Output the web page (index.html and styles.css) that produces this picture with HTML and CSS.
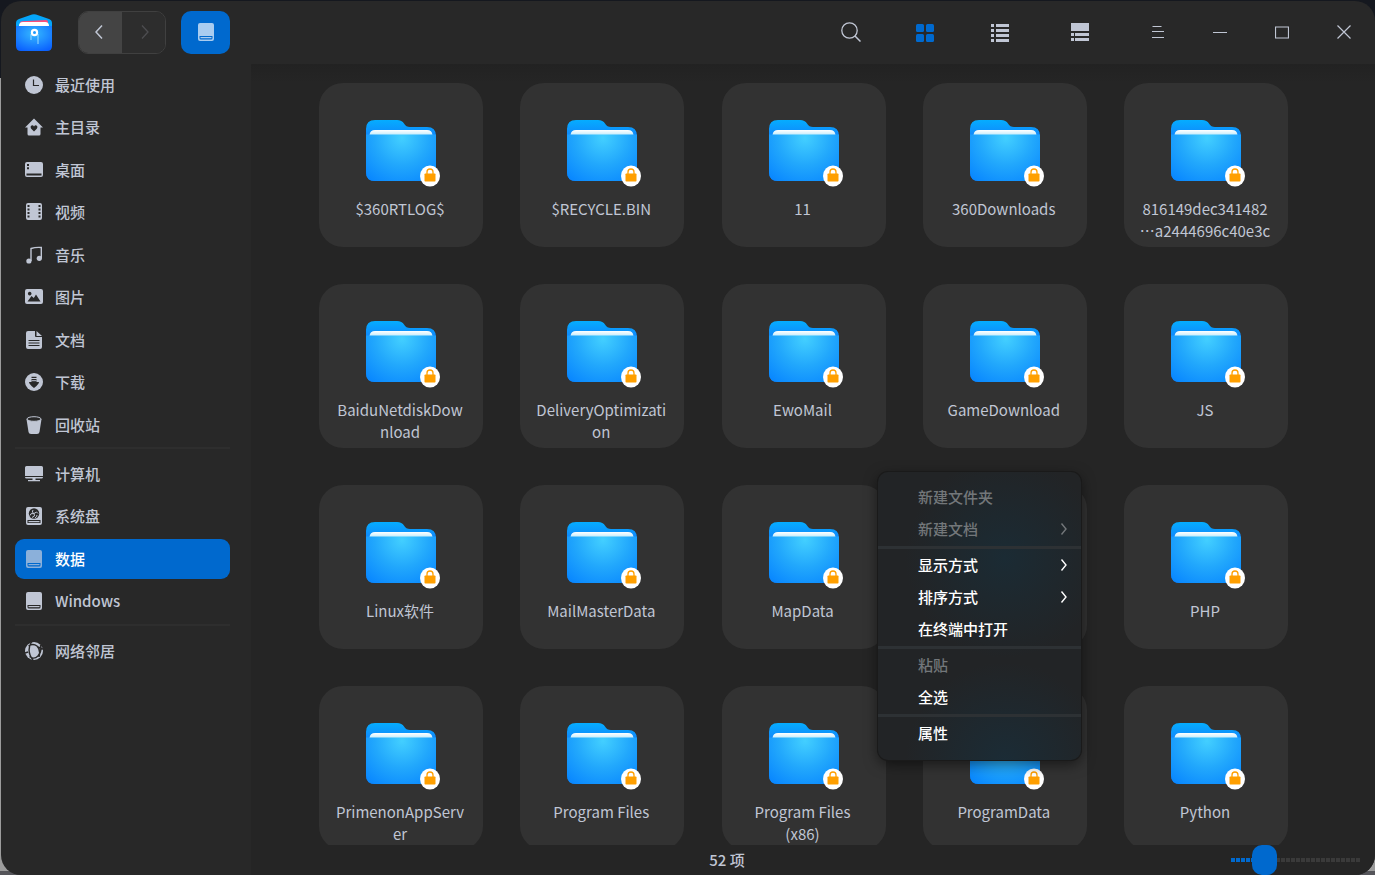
FILE: index.html
```html
<!DOCTYPE html>
<html lang="zh-CN">
<head>
<meta charset="utf-8">
<title>数据</title>
<link rel="stylesheet" href="styles.css">
</head>
<body>
<svg class="defs" aria-hidden="true">
  <defs>
    <linearGradient id="folder-back" x1="0" y1="0" x2="0" y2="1">
      <stop offset="0" stop-color="#05adff"/><stop offset=".25" stop-color="#1088fb"/><stop offset="1" stop-color="#0a80ff"/>
    </linearGradient>
    <radialGradient id="folder-front" gradientUnits="userSpaceOnUse" cx="43" cy="19" r="54">
      <stop offset="0" stop-color="#43cfff"/><stop offset=".5" stop-color="#22a8fc"/><stop offset="1" stop-color="#0785ff"/>
    </radialGradient>
    <linearGradient id="sheet" x1="0" y1="0" x2="0" y2="1">
      <stop offset="0" stop-color="#ffffff"/><stop offset="1" stop-color="#c2ebfb"/>
    </linearGradient>
    <radialGradient id="logo-front" cx=".5" cy=".3" r=".75">
      <stop offset="0" stop-color="#35b9ff"/><stop offset="1" stop-color="#0b62ff"/>
    </radialGradient>
  </defs>
  <symbol id="folder" viewBox="0 0 84 68">
    <path d="M7 10q0-9 9-9h22q5 0 7 3.500q2 3.500 6 3.500h17q9 0 9 9v36q0 9-9 9H16q-9 0-9-9z" fill="url(#folder-back)"/>
    <path d="M10.500 16q.5-5 5.500-5h52q5 0 5.500 5z" fill="url(#sheet)"/>
    <path d="M7 15.500h70V53q0 9-9 9H16q-9 0-9-9z" fill="url(#folder-front)"/>
    <ellipse cx="71" cy="57" rx="10" ry="10.500" fill="#fff"/>
    <path d="M68 57v-4q0-3 3-3t3 3v4" fill="none" stroke="#ff9f00" stroke-width="1.300"/>
    <rect x="65.500" y="54.500" width="11" height="8" rx=".8" fill="#ff9f00"/>
  </symbol>
  <symbol id="clock" viewBox="0 0 18 18"><circle cx="9" cy="9" r="9" fill="currentColor"/><path d="M8.500 3.500v6H14" fill="none" stroke="#282828" stroke-width="1.200"/></symbol>
  <symbol id="home" viewBox="0 0 18 18"><path fill="currentColor" fill-rule="evenodd" d="M9 .5L18 9.500h-2.500V16q0 1.500-1.500 1.500H4q-1.500 0-1.500-1.500V9.500H0zM9 13.500l3-3q1.200-2-.5-3Q10 6.900 9 8.500 8 6.900 6.500 7.500q-1.700 1-.5 3z"/></symbol>
  <symbol id="desktop" viewBox="0 0 18 18"><path fill="currentColor" fill-rule="evenodd" d="M2 1h14q2 0 2 2v11q0 2-2 2H2q-2 0-2-2V3q0-2 2-2zM2 3v2h2V3zM2 6.300v2h2v-2zM1.500 12.500v2h15v-2z"/></symbol>
  <symbol id="video" viewBox="0 0 18 18"><path fill="currentColor" fill-rule="evenodd" d="M3 0h12q2 0 2 2v13q0 2-2 2H3q-2 0-2-2V2q0-2 2-2zM2.500 2v2h2V2zM2.500 5.500v2h2v-2zM2.500 9v2h2V9zM2.500 12.500v2h2v-2zM13.500 2v2h2V2zM13.500 5.500v2h2v-2zM13.500 9v2h2V9zM13.500 12.500v2h2v-2z"/></symbol>
  <symbol id="music" viewBox="0 0 18 18"><path d="M6 15V2.500q5-1.500 10.300-1V12" fill="none" stroke="currentColor" stroke-width="1.400"/><circle cx="3.900" cy="15" r="2.600" fill="currentColor"/><circle cx="14.300" cy="12.300" r="2.600" fill="currentColor"/></symbol>
  <symbol id="picture" viewBox="0 0 18 18"><path fill="currentColor" fill-rule="evenodd" d="M2 1h14q2 0 2 2v11q0 2-2 2H2q-2 0-2-2V3q0-2 2-2zM2.500 13.500h13L11 6.500 8.800 10 6.500 8zM4.700 3.800a1.800 1.800 0 1 0 .01 0z"/></symbol>
  <symbol id="document" viewBox="0 0 18 18"><path fill="currentColor" d="M3 0h7v5q0 1 1 1h6v10q0 2-2 2H3q-2 0-2-2V2q0-2 2-2zM11.500 0L17 5h-5.500z"/><path d="M3.500 9.500h11M3.500 12h11M3.500 14.500h11" stroke="#282828" stroke-width="1"/></symbol>
  <symbol id="download" viewBox="0 0 18 18"><circle cx="9" cy="9" r="9" fill="currentColor"/><path d="M6.500 3.800h5v1.200h-5zM6.500 6h5v3H14q0 2-5 6-5-4-5-6h2.500z" fill="#282828"/><path d="M6.500 7.700h5" stroke="currentColor"/></symbol>
  <symbol id="trash" viewBox="0 0 18 18"><path fill="currentColor" d="M1.500 3l2 13q.4 2 2.500 2h6q2.100 0 2.500-2l2-13z"/><ellipse cx="9" cy="3" rx="7" ry="2.300" fill="#282828" stroke="currentColor"/></symbol>
  <symbol id="computer" viewBox="0 0 18 18"><path fill="currentColor" d="M1.500 1h15Q18 1 18 2.500V11H0V2.500Q0 1 1.500 1zM0 12h18q0 1.500-1.500 1.500h-6V15H15v1.200H3V15h4.500v-1.500h-6Q0 13.500 0 12z"/></symbol>
  <symbol id="system" viewBox="0 0 18 18"><path fill="currentColor" fill-rule="evenodd" d="M3 0h12q2 0 2 2v14q0 2-2 2H3q-2 0-2-2V2q0-2 2-2zM2.500 13v3h13v-3z"/><path fill="currentColor" d="M3.500 14h11v1.200h-11z"/><circle cx="9" cy="6.500" r="5.200" fill="#282828"/><path d="M9 6.500q-3-1-1-3.500M9 6.500q3-3 4 0M9 6.500q2 3-2 4M9 6.500q-4-.5-4 2M12 8q0 2-2 3" fill="none" stroke="currentColor" stroke-width="1"/></symbol>
  <symbol id="disk" viewBox="0 0 18 18"><path fill="currentColor" fill-rule="evenodd" d="M3 0h12q2 0 2 2v14q0 2-2 2H3q-2 0-2-2V2q0-2 2-2zM2.500 13v2q0 1.500 1.500 1.500h10q1.500 0 1.500-1.500v-2z"/><path fill="currentColor" d="M3.500 14h11v1.200h-11z"/></symbol>
  <symbol id="network" viewBox="0 0 18 18"><circle cx="9" cy="9" r="9" fill="currentColor"/><path d="M6.500 0Q1 9 8 18M3.500 4Q8 1 12 4q4 4 2 11M15.500 3Q17 10 13 14t-8.500.5M0 11l3-1M13 5l5 2" fill="none" stroke="#282828" stroke-width="1.400"/></symbol>
  <symbol id="chevron" viewBox="0 0 8 14"><path d="M1.500 1.500L6 7l-4.500 5.500" fill="none" stroke="currentColor" stroke-width="1.400"/></symbol>
</svg>

<div class="window">
  <header class="titlebar">
    <svg class="logo" viewBox="0 0 36 37" aria-hidden="true">
      <path d="M0 9q0-3 3-4L16 .5q2-.7 4 0L33 5q3 1 3 4v10H0z" fill="#05a5fa"/>
      <path d="M4 9q0-1.500 2-1.700L30 6q2 0 2 2v5H4z" fill="#fa4e7c"/>
      <path d="M3 12q0-4 4-4h22q4 0 4 4z" fill="#fff"/>
      <path d="M0 12h36v20q0 5-5 5H5q-5 0-5-5z" fill="url(#logo-front)"/>
      <path d="M15 20v6M22 20v10" stroke="#9bdcff" stroke-width="1"/>
      <circle cx="18.500" cy="18.500" r="2.600" fill="#1f9cff" stroke="#fff" stroke-width="2.200"/>
    </svg>
    <div class="history">
      <button class="history-button" type="button" aria-label="后退"><svg width="8" height="14" viewBox="0 0 8 14"><path d="M7 .5L1 7l6 6.500" fill="none" stroke="currentColor" stroke-width="1.500"/></svg></button>
      <button class="history-button forward" type="button" aria-label="前进" disabled><svg width="8" height="14" viewBox="0 0 8 14"><path d="M1 .5L7 7l-6 6.500" fill="none" stroke="currentColor" stroke-width="1.300"/></svg></button>
    </div>
    <button class="location" type="button" aria-label="数据"><svg class="icon"><use href="#disk"/></svg></button>
    <div class="tools">
      <button class="tool" type="button" aria-label="搜索"><svg width="22" height="22" viewBox="0 0 22 22"><circle cx="10.500" cy="8.500" r="7.700" fill="none" stroke="currentColor" stroke-width="1.300"/><path d="M16 14l5.500 5.500" stroke="currentColor" stroke-width="1.500"/></svg></button>
      <button class="tool active" type="button" aria-label="图标视图"><svg width="18" height="18" viewBox="0 0 18 18" fill="currentColor"><rect width="8" height="8" rx="1.500"/><rect x="10" width="8" height="8" rx="1.500"/><rect y="10" width="8" height="8" rx="1.500"/><rect x="10" y="10" width="8" height="8" rx="1.500"/></svg></button>
      <button class="tool" type="button" aria-label="列表视图"><svg width="18" height="18" viewBox="0 0 18 18" fill="currentColor"><path d="M0 0h3v3H0zM5 0h13v3H5zM0 5h3v3H0zM5 5h13v3H5zM0 10h3v3H0zM5 10h13v3H5zM0 15h3v3H0zM5 15h13v3H5z"/></svg></button>
    </div>
    <button class="tool details" type="button" aria-label="详细信息"><svg width="18" height="18" viewBox="0 0 18 18" fill="currentColor"><path d="M0 0h18v8H0zM0 10h3v3H0zM4 10h14v3H4zM0 15h3v3H0zM4 15h14v3H4z"/></svg></button>
    <div class="window-buttons">
      <button class="window-button" type="button" aria-label="菜单"><svg width="14" height="14" viewBox="0 0 14 14"><path d="M1.500 1.500h9M1 6.500h12M1 12.500h12" stroke="currentColor"/></svg></button>
      <button class="window-button" type="button" aria-label="最小化"><svg width="14" height="14" viewBox="0 0 14 14"><path d="M0 7.500h14" stroke="currentColor"/></svg></button>
      <button class="window-button" type="button" aria-label="最大化"><svg width="14" height="14" viewBox="0 0 14 14"><path d="M.5 2h13v11H.5z" fill="none" stroke="currentColor" stroke-width="1.200"/></svg></button>
      <button class="window-button" type="button" aria-label="关闭"><svg width="14" height="14" viewBox="0 0 14 14"><path d="M.5.5l13 13M13.500.5l-13 13" stroke="currentColor" stroke-width="1.200"/></svg></button>
    </div>
  </header>

  <div class="body">
    <nav class="sidebar">
      <ul class="places">
        <li><a class="place" href="#recent"><svg class="icon"><use href="#clock"/></svg>最近使用</a></li>
        <li><a class="place" href="#homedir"><svg class="icon"><use href="#home"/></svg>主目录</a></li>
        <li><a class="place" href="#desk"><svg class="icon"><use href="#desktop"/></svg>桌面</a></li>
        <li><a class="place" href="#videos"><svg class="icon"><use href="#video"/></svg>视频</a></li>
        <li><a class="place" href="#songs"><svg class="icon"><use href="#music"/></svg>音乐</a></li>
        <li><a class="place" href="#pictures"><svg class="icon"><use href="#picture"/></svg>图片</a></li>
        <li><a class="place" href="#documents"><svg class="icon"><use href="#document"/></svg>文档</a></li>
        <li><a class="place" href="#downloads"><svg class="icon"><use href="#download"/></svg>下载</a></li>
        <li><a class="place" href="#bin"><svg class="icon"><use href="#trash"/></svg>回收站</a></li>
      </ul>
      <ul class="places">
        <li><a class="place" href="#machine"><svg class="icon"><use href="#computer"/></svg>计算机</a></li>
        <li><a class="place" href="#systemdisk"><svg class="icon"><use href="#system"/></svg>系统盘</a></li>
        <li><a class="place selected" href="#data" aria-current="page"><svg class="icon"><use href="#disk"/></svg>数据</a></li>
        <li><a class="place" href="#windows"><svg class="icon"><use href="#disk"/></svg>Windows</a></li>
      </ul>
      <ul class="places">
        <li><a class="place" href="#neighbours"><svg class="icon"><use href="#network"/></svg>网络邻居</a></li>
      </ul>
    </nav>

    <main class="content">
      <div class="files">
        <ul class="grid">
          <li class="card"><svg class="folder"><use href="#folder"/></svg><span class="name">$360RTLOG$</span></li>
          <li class="card"><svg class="folder"><use href="#folder"/></svg><span class="name">$RECYCLE.BIN</span></li>
          <li class="card"><svg class="folder"><use href="#folder"/></svg><span class="name">11</span></li>
          <li class="card"><svg class="folder"><use href="#folder"/></svg><span class="name">360Downloads</span></li>
          <li class="card"><svg class="folder"><use href="#folder"/></svg><span class="name">816149dec341482<br>…a2444696c40e3c</span></li>
          <li class="card"><svg class="folder"><use href="#folder"/></svg><span class="name">BaiduNetdiskDow<br>nload</span></li>
          <li class="card"><svg class="folder"><use href="#folder"/></svg><span class="name">DeliveryOptimizati<br>on</span></li>
          <li class="card"><svg class="folder"><use href="#folder"/></svg><span class="name">EwoMail</span></li>
          <li class="card"><svg class="folder"><use href="#folder"/></svg><span class="name">GameDownload</span></li>
          <li class="card"><svg class="folder"><use href="#folder"/></svg><span class="name">JS</span></li>
          <li class="card"><svg class="folder"><use href="#folder"/></svg><span class="name">Linux软件</span></li>
          <li class="card"><svg class="folder"><use href="#folder"/></svg><span class="name">MailMasterData</span></li>
          <li class="card"><svg class="folder"><use href="#folder"/></svg><span class="name">MapData</span></li>
          <li class="card"><svg class="folder"><use href="#folder"/></svg></li>
          <li class="card"><svg class="folder"><use href="#folder"/></svg><span class="name">PHP</span></li>
          <li class="card"><svg class="folder"><use href="#folder"/></svg><span class="name">PrimenonAppServ<br>er</span></li>
          <li class="card"><svg class="folder"><use href="#folder"/></svg><span class="name">Program Files</span></li>
          <li class="card"><svg class="folder"><use href="#folder"/></svg><span class="name">Program Files<br>(x86)</span></li>
          <li class="card"><svg class="folder"><use href="#folder"/></svg><span class="name">ProgramData</span></li>
          <li class="card"><svg class="folder"><use href="#folder"/></svg><span class="name">Python</span></li>
        </ul>
      </div>
      <footer class="status">
        <span class="count">52 项</span>
        <input class="zoom" type="range" min="0" max="100" value="20" aria-label="图标大小">
      </footer>
    </main>
  </div>
</div>

<div class="menu" role="menu">
  <button class="menu-item" role="menuitem" type="button" disabled>新建文件夹</button>
  <button class="menu-item" role="menuitem" type="button" disabled>新建文档<svg class="arrow"><use href="#chevron"/></svg></button>
  <hr class="separator">
  <button class="menu-item" role="menuitem" type="button">显示方式<svg class="arrow"><use href="#chevron"/></svg></button>
  <button class="menu-item" role="menuitem" type="button">排序方式<svg class="arrow"><use href="#chevron"/></svg></button>
  <button class="menu-item" role="menuitem" type="button">在终端中打开</button>
  <hr class="separator">
  <button class="menu-item" role="menuitem" type="button" disabled>粘贴</button>
  <button class="menu-item" role="menuitem" type="button">全选</button>
  <hr class="separator">
  <button class="menu-item" role="menuitem" type="button">属性</button>
</div>
</body>
</html>
```
FILE: styles.css
```css
* { box-sizing: border-box; }

body {
  margin: 0;
  height: 100vh;
  padding: 1px 0 0 1px;
  overflow: hidden;
  background: linear-gradient(#15181f 0 78px, #9c9c9c 78px calc(100% - 4px), #55555a calc(100% - 4px));
  color: #c0c6d4;
  font: 500 15px/22px "Noto Sans CJK SC", sans-serif;
}

button {
  margin: 0;
  padding: 0;
  border: 0;
  background: none;
  color: inherit;
  font: inherit;
}

ul { margin: 0; padding: 0; list-style: none; }
svg { display: block; flex: none; }
.defs { position: absolute; width: 0; height: 0; }
.icon { width: 18px; height: 18px; }

.window {
  display: flex;
  flex-direction: column;
  height: 100%;
  overflow: hidden;
  border-radius: 20px;
  background: #282828;
}

/* Title bar */
.titlebar {
  display: flex;
  align-items: center;
  flex: none;
  height: 63px;
  padding: 0 0 1px 15px;
}
.logo { width: 36px; height: 37px; }
.history {
  display: flex;
  height: 43px;
  margin-left: 26px;
  overflow: hidden;
  border: 1px solid #404040;
  border-radius: 10px;
}
.history-button {
  display: grid;
  place-items: center;
  width: 43px;
  padding-right: 3px;
  background: #444;
}
.history-button.forward { padding: 0 0 0 2px; background: #2d2d2d; color: #4d4d50; }
.location {
  display: grid;
  place-items: center;
  width: 49px;
  height: 43px;
  margin-left: 15px;
  border-radius: 10px;
  background: #0069ce;
  color: #a9ccf0;
}
.tools { display: flex; gap: 35px; margin-left: auto; }
.tool {
  display: grid;
  place-items: center;
  width: 40px;
  height: 40px;
}
.tools .tool { padding-top: 2px; }
.tool.active { color: #0069ce; }
.details { margin-left: 40px; }
.window-buttons { display: flex; margin-left: 27px; }
.window-button {
  display: grid;
  place-items: center;
  width: 62px;
  height: 62px;
}

.body { display: flex; flex: 1; min-height: 0; }

/* Sidebar */
.sidebar { flex: none; width: 250px; padding: 0 21px 0 14px; }
.places li { height: 42px; padding: 1px 0; }
.places li:nth-child(even) { height: 43px; }
.places + .places {
  margin-top: 1px;
  padding-top: 4px;
  border-top: 2px solid #2e2e2e;
}
.place {
  display: flex;
  align-items: center;
  gap: 12px;
  height: 40px;
  padding-left: 10px;
  border-radius: 9px;
  color: inherit;
  text-decoration: none;
}
.place.selected { background: #0069ce; color: #fff; }
.place.selected .icon { color: #8bb0da; }

/* File grid */
.content {
  display: flex;
  flex-direction: column;
  flex: 1;
  min-width: 0;
  background: linear-gradient(#222, #252525 18px);
}
.files {
  flex: 1;
  min-height: 0;
  padding: 19px 87px 0 68px;
  overflow: hidden;
}
.grid {
  display: grid;
  grid-template-columns: repeat(auto-fill, 164px);
  justify-content: space-between;
  gap: 37px;
}
.card {
  display: flex;
  flex-direction: column;
  align-items: center;
  min-height: 164px;
  padding-top: 36px;
  border-radius: 24px;
  background: #323232;
}
.folder { width: 84px; height: 68px; }
.name {
  margin-top: 11px;
  padding-right: 2px;
  font-weight: 400;
  text-align: center;
  white-space: nowrap;
}

.status { display: flex; align-items: center; flex: none; height: 30px; }
.count { flex: 1; text-align: center; }

/* Icon size slider */
.zoom {
  appearance: none;
  width: 129px;
  height: 30px;
  margin: 0 15px 0 28px;
  background: none;
}
.zoom::-webkit-slider-runnable-track {
  height: 4px;
  background:
    repeating-linear-gradient(to right, transparent 0 4px, #252525 4px 5px),
    linear-gradient(to right, #0069ce 25%, #3a3a3a 25%);
}
.zoom::-webkit-slider-thumb {
  appearance: none;
  width: 25px;
  height: 30px;
  margin-top: -13px;
  border-radius: 10px;
  background: #0069ce;
}

/* Context menu */
.menu {
  position: absolute;
  left: 878px;
  top: 472px;
  width: 203px;
  padding: 9px 0 11px;
  border-radius: 10px;
  background:
    radial-gradient(circle at 127px 86px, #1b2b34, #1b2b3400 100px),
    radial-gradient(circle at 127px 290px, #1b2c36, #1b2c3600 100px),
    #222426;
  box-shadow: 0 0 0 1px #1a1a1a, 0 4px 14px #0008;
  color: #fff;
}
.menu-item {
  display: flex;
  align-items: center;
  justify-content: space-between;
  width: 100%;
  height: 32px;
  padding: 0 13px 0 40px;
}
.menu-item:disabled { color: #73777a; }
.arrow { width: 8px; height: 14px; }
.separator {
  height: 3px;
  margin: 1px 0 0;
  border: 0;
  background: #2d3134;
}
```
